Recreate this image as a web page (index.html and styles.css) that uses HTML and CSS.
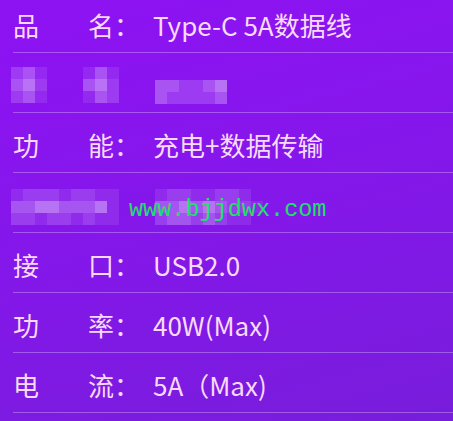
FILE: index.html
```html
<html lang="zh">
<head>
    <meta charset="UTF-8">
    <title>参数</title>
    <link rel="stylesheet" href="styles.css">
</head>
<body>
<div class="spec">
    <div class="row">
        <span class="k1">品</span><span class="k2">名：</span><span class="val">Type-C 5A数据线</span>
    </div>
    <div class="row">
        <div class="mosaic m-small sq1">
            <i class="b"></i><i class="c"></i><i class="a"></i>
            <i class="c"></i><i class="d"></i><i class="b"></i>
            <i class="b"></i><i class="c"></i><i class="a"></i>
        </div>
        <div class="mosaic m-small sq2">
            <i class="a"></i><i class="c"></i><i class="a"></i>
            <i class="c"></i><i class="d"></i><i class="b"></i>
            <i class="a"></i><i class="c"></i><i class="b"></i>
        </div>
        <div class="mosaic m-wide sq3">
            <i class="c"></i><i class="c"></i><i class="b"></i><i class="b"></i><i class="c"></i><i class="d"></i>
            <i class="c"></i><i class="b"></i><i class="b"></i><i class="b"></i><i class="b"></i><i class="c"></i>
        </div>
    </div>
    <div class="row">
        <span class="k1">功</span><span class="k2">能：</span><span class="val">充电+数据传输</span>
    </div>
    <div class="row">
        <div class="mosaic m-long sq4">
            <i class="a"></i><i class="b"></i><i class="b"></i><i class="b"></i><i class="a"></i><i class="b"></i><i class="b"></i><i class="a"></i><i class="a"></i>
            <i class="c"></i><i class="c"></i><i class="d"></i><i class="d"></i><i class="c"></i><i class="c"></i><i class="c"></i><i class="d"></i><i class="a"></i>
            <i class="b"></i><i class="b"></i><i class="a"></i><i class="b"></i><i class="b"></i><i class="a"></i><i class="b"></i><i class="a"></i><i class="a"></i>
        </div>
        <div class="mosaic m-long sq5">
            <i class="a"></i><i class="b"></i><i class="b"></i><i class="a"></i><i class="a"></i><i class="b"></i><i class="b"></i><i class="a"></i><i class="z"></i>
            <i class="c"></i><i class="c"></i><i class="d"></i><i class="c"></i><i class="d"></i><i class="c"></i><i class="b"></i><i class="b"></i><i class="a"></i>
            <i class="b"></i><i class="c"></i><i class="c"></i><i class="b"></i><i class="c"></i><i class="b"></i><i class="a"></i><i class="a"></i><i class="z"></i>
        </div>
        <span class="watermark">www.bjjdwx.com</span>
    </div>
    <div class="row">
        <span class="k1">接</span><span class="k2">口：</span><span class="val">USB2.0</span>
    </div>
    <div class="row">
        <span class="k1">功</span><span class="k2">率：</span><span class="val">40W(Max)</span>
    </div>
    <div class="row">
        <span class="k1">电</span><span class="k2">流：</span><span class="val">5A（Max)</span>
    </div>
</div>
</body>
</html>
```

FILE: styles.css
```css
body {
    margin: 0;
    height: 421px;
    overflow: hidden;
    background: linear-gradient(165deg, #8e12f3 0%, #8417ea 50%, #781ddb 100%);
    font-family: "Noto Sans CJK SC", "Noto Sans", sans-serif;
    color: #f7dafb;
}

.spec {
    margin-top: -7px;
}

.row {
    position: relative;
    display: grid;
    grid-template-columns: 75px 65px 1fr;
    align-items: center;
    height: 59px;
    margin-left: 13px;
    border-bottom: 1px solid rgba(255, 255, 255, 0.28);
    font-size: 26px;
    line-height: 30px;
}

.k1 {
    padding-left: 0;
    margin-top: 4px;
}

.k2,
.val {
    margin-top: 4px;
    white-space: nowrap;
}

/* blurred blocks */
.mosaic {
    display: grid;
    grid-auto-rows: 12px;
}

.mosaic i {
    display: block;
}

.m-small {
    grid-template-columns: repeat(3, 12px);
}

.m-wide {
    grid-template-columns: repeat(6, 12px);
}

.m-long {
    grid-template-columns: repeat(9, 12px);
}

.sq1 {
    margin-left: -2px;
    margin-top: 4px;
}

.sq2 {
    margin-left: -5px;
    margin-top: 4px;
}

.sq3 {
    margin-left: 2px;
    margin-top: 18px;
}

.sq4 {
    grid-column: 1 / 3;
    margin-left: -2px;
    margin-top: 8px;
}

.sq5 {
    margin-left: 2px;
    margin-top: 8px;
}

.a { background: rgba(255, 255, 255, 0.09); }
.b { background: rgba(255, 255, 255, 0.17); }
.c { background: rgba(255, 255, 255, 0.27); }
.d { background: rgba(255, 255, 255, 0.4); }
.z { background: transparent; }

.watermark {
    position: absolute;
    left: 116px;
    top: 24px;
    font-family: "Liberation Mono", monospace;
    font-size: 23.5px;
    line-height: 26px;
    color: #22e06a;
}
```
